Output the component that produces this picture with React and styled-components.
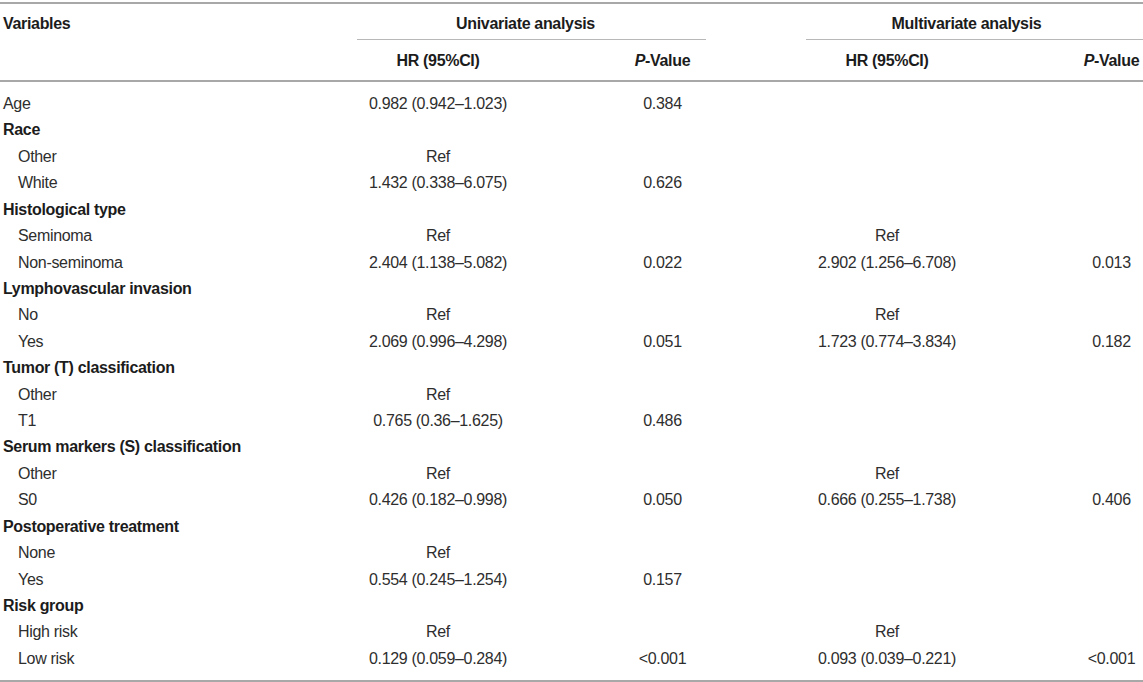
import React from 'react';
import styled, { createGlobalStyle } from 'styled-components';

const GlobalStyle = createGlobalStyle`
  html, body { margin: 0; padding: 0; background: #ffffff; }
  body { font-family: "Liberation Sans", Arial, Helvetica, sans-serif; color: #222; }
`;

const COLS = '357px 162px 287px 162px 287px';

const Wrapper = styled.div`
  width: 1143px;
  overflow: hidden;
  padding-top: 2px;
`;

const Table = styled.div`
  width: 1255px;
  border-top: 2px solid #a8a8a8;
  border-bottom: 2px solid #a8a8a8;
  font-size: 16px;
  letter-spacing: -0.32px;
`;

const Head = styled.div`
  display: grid;
  grid-template-columns: ${COLS};
  grid-template-rows: 36px 40px;
  border-bottom: 2px solid #a8a8a8;
  font-weight: bold;
  color: #1c1c1c;
`;

const VarHead = styled.div`
  grid-column: 1;
  grid-row: 1;
  padding: 7px 0 0 3px;
  line-height: 26px;
`;

const GroupHead = styled.div`
  grid-column: ${(p) => p.$col} / span 2;
  grid-row: 1;
  margin-right: 100px;
  padding: 7px ${(p) => p.$shift}px 0 0;
  height: 28px;
  line-height: 26px;
  text-align: center;
  border-bottom: 1px solid #b8b8b8;
  box-sizing: content-box;
`;

const SubHead = styled.div`
  grid-column: ${(p) => p.$col};
  grid-row: 2;
  padding-top: 8px;
  line-height: 26px;
  text-align: center;
`;

const Body = styled.div`
  padding: 9px 0 8px;
`;

const Row = styled.div`
  display: grid;
  grid-template-columns: ${COLS};
  height: 26.43px;
  line-height: 26.43px;
`;

const Label = styled.div`
  padding-left: ${(p) => (p.$indent ? '18px' : '3px')};
  font-weight: ${(p) => (p.$bold ? 'bold' : 'normal')};
  color: ${(p) => (p.$bold ? '#1c1c1c' : '#2e2e2e')};
  white-space: nowrap;
`;

const Cell = styled.div`
  text-align: center;
  color: #2e2e2e;
  white-space: nowrap;
`;

const rows = [
  { label: 'Age', v: ['0.982 (0.942–1.023)', '0.384', '', ''] },
  { label: 'Race', group: true },
  { label: 'Other', indent: true, v: ['Ref', '', '', ''] },
  { label: 'White', indent: true, v: ['1.432 (0.338–6.075)', '0.626', '', ''] },
  { label: 'Histological type', group: true },
  { label: 'Seminoma', indent: true, v: ['Ref', '', 'Ref', ''] },
  { label: 'Non-seminoma', indent: true, v: ['2.404 (1.138–5.082)', '0.022', '2.902 (1.256–6.708)', '0.013'] },
  { label: 'Lymphovascular invasion', group: true },
  { label: 'No', indent: true, v: ['Ref', '', 'Ref', ''] },
  { label: 'Yes', indent: true, v: ['2.069 (0.996–4.298)', '0.051', '1.723 (0.774–3.834)', '0.182'] },
  { label: 'Tumor (T) classification', group: true },
  { label: 'Other', indent: true, v: ['Ref', '', '', ''] },
  { label: 'T1', indent: true, v: ['0.765 (0.36–1.625)', '0.486', '', ''] },
  { label: 'Serum markers (S) classification', group: true },
  { label: 'Other', indent: true, v: ['Ref', '', 'Ref', ''] },
  { label: 'S0', indent: true, v: ['0.426 (0.182–0.998)', '0.050', '0.666 (0.255–1.738)', '0.406'] },
  { label: 'Postoperative treatment', group: true },
  { label: 'None', indent: true, v: ['Ref', '', '', ''] },
  { label: 'Yes', indent: true, v: ['0.554 (0.245–1.254)', '0.157', '', ''] },
  { label: 'Risk group', group: true },
  { label: 'High risk', indent: true, v: ['Ref', '', 'Ref', ''] },
  { label: 'Low risk', indent: true, v: ['0.129 (0.059–0.284)', '<0.001', '0.093 (0.039–0.221)', '<0.001'] },
];

const PValue = () => (
  <>
    <i>P</i>-Value
  </>
);

export default function App() {
  return (
    <>
      <GlobalStyle />
      <Wrapper>
        <Table>
          <Head>
            <VarHead>Variables</VarHead>
            <GroupHead $col={2} $shift={12}>Univariate analysis</GroupHead>
            <GroupHead $col={4} $shift={28}>Multivariate analysis</GroupHead>
            <SubHead $col={2}>HR (95%CI)</SubHead>
            <SubHead $col={3}><PValue /></SubHead>
            <SubHead $col={4}>HR (95%CI)</SubHead>
            <SubHead $col={5}><PValue /></SubHead>
          </Head>
          <Body>
            {rows.map((r, i) => (
              <Row key={i}>
                <Label $bold={r.group} $indent={r.indent}>{r.label}</Label>
                {(r.v || ['', '', '', '']).map((val, j) => (
                  <Cell key={j}>{val}</Cell>
                ))}
              </Row>
            ))}
          </Body>
        </Table>
      </Wrapper>
    </>
  );
}
